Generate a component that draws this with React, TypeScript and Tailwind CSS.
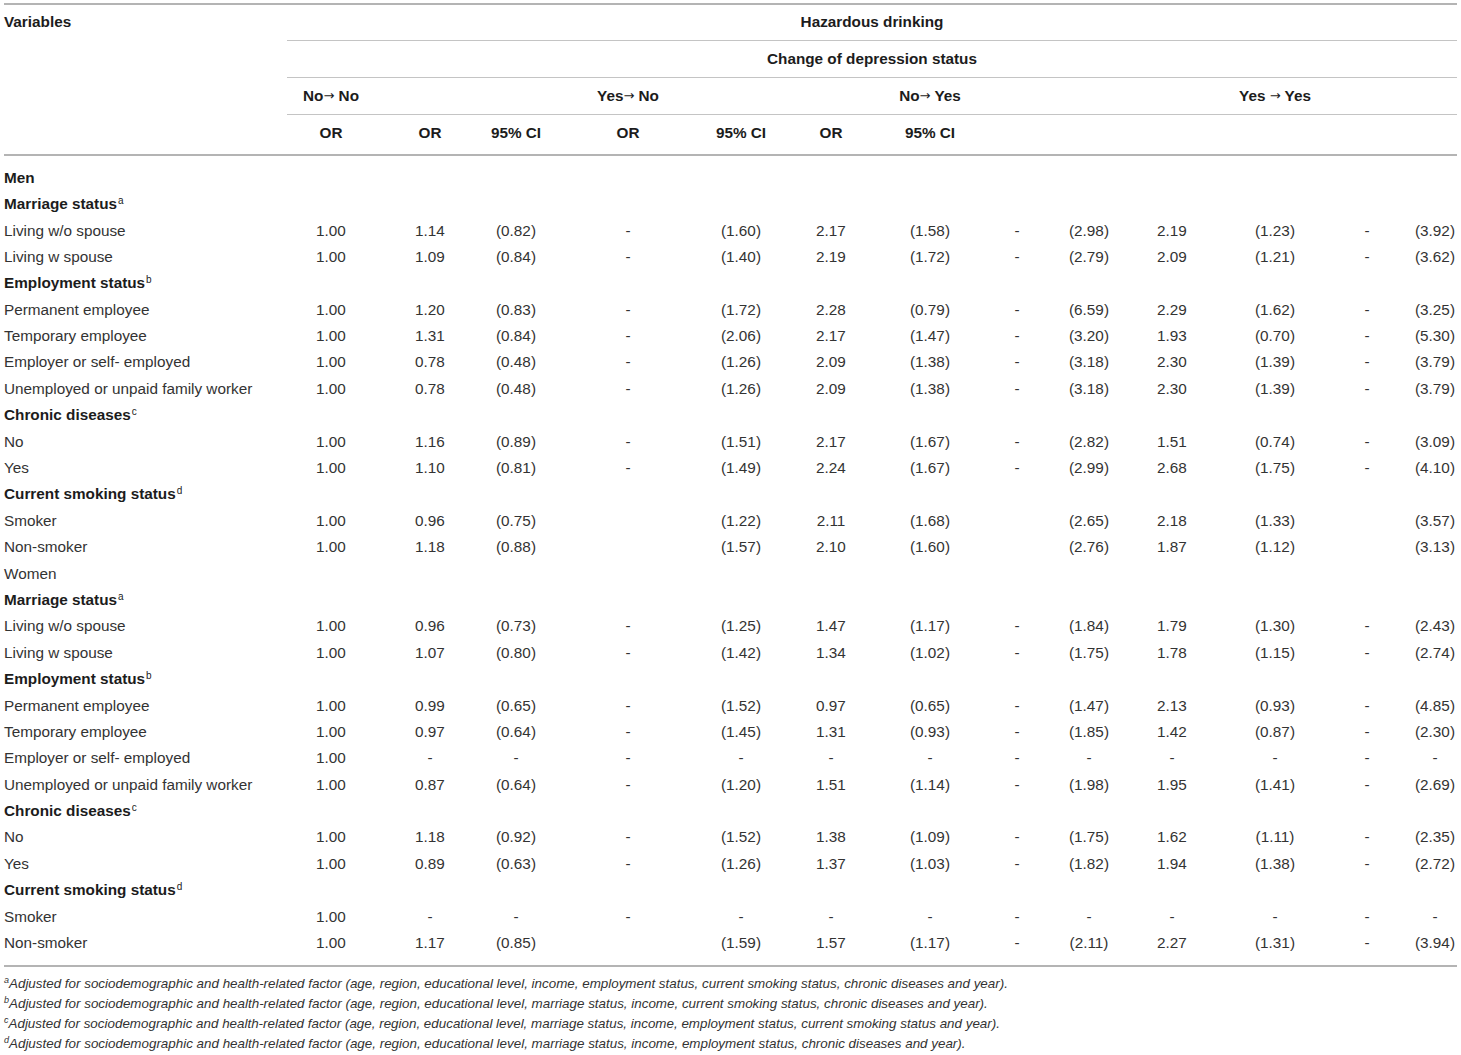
import React from 'react';

type Row = {
  label: string;
  sup?: string;
  kind?: 'group' | 'section' | 'plain';
  cells?: string[];
};

const COLS =
  'grid grid-cols-[283px_88px_110px_62px_162px_64px_116px_82px_92px_52px_114px_92px_92px_44px]';

const allDash = ['-', '-', '-', '-', '-', '-', '-', '-', '-', '-', '-', '-'];

const rows: Row[] = [
  { label: 'Men', kind: 'group' },
  { label: 'Marriage status', sup: 'a', kind: 'section' },
  { label: 'Living w/o spouse', cells: ['1.00', '1.14', '(0.82)', '-', '(1.60)', '2.17', '(1.58)', '-', '(2.98)', '2.19', '(1.23)', '-', '(3.92)'] },
  { label: 'Living w spouse', cells: ['1.00', '1.09', '(0.84)', '-', '(1.40)', '2.19', '(1.72)', '-', '(2.79)', '2.09', '(1.21)', '-', '(3.62)'] },
  { label: 'Employment status', sup: 'b', kind: 'section' },
  { label: 'Permanent employee', cells: ['1.00', '1.20', '(0.83)', '-', '(1.72)', '2.28', '(0.79)', '-', '(6.59)', '2.29', '(1.62)', '-', '(3.25)'] },
  { label: 'Temporary employee', cells: ['1.00', '1.31', '(0.84)', '-', '(2.06)', '2.17', '(1.47)', '-', '(3.20)', '1.93', '(0.70)', '-', '(5.30)'] },
  { label: 'Employer or self- employed', cells: ['1.00', '0.78', '(0.48)', '-', '(1.26)', '2.09', '(1.38)', '-', '(3.18)', '2.30', '(1.39)', '-', '(3.79)'] },
  { label: 'Unemployed or unpaid family worker', cells: ['1.00', '0.78', '(0.48)', '-', '(1.26)', '2.09', '(1.38)', '-', '(3.18)', '2.30', '(1.39)', '-', '(3.79)'] },
  { label: 'Chronic diseases', sup: 'c', kind: 'section' },
  { label: 'No', cells: ['1.00', '1.16', '(0.89)', '-', '(1.51)', '2.17', '(1.67)', '-', '(2.82)', '1.51', '(0.74)', '-', '(3.09)'] },
  { label: 'Yes', cells: ['1.00', '1.10', '(0.81)', '-', '(1.49)', '2.24', '(1.67)', '-', '(2.99)', '2.68', '(1.75)', '-', '(4.10)'] },
  { label: 'Current smoking status', sup: 'd', kind: 'section' },
  { label: 'Smoker', cells: ['1.00', '0.96', '(0.75)', '', '(1.22)', '2.11', '(1.68)', '', '(2.65)', '2.18', '(1.33)', '', '(3.57)'] },
  { label: 'Non-smoker', cells: ['1.00', '1.18', '(0.88)', '', '(1.57)', '2.10', '(1.60)', '', '(2.76)', '1.87', '(1.12)', '', '(3.13)'] },
  { label: 'Women', kind: 'plain' },
  { label: 'Marriage status', sup: 'a', kind: 'section' },
  { label: 'Living w/o spouse', cells: ['1.00', '0.96', '(0.73)', '-', '(1.25)', '1.47', '(1.17)', '-', '(1.84)', '1.79', '(1.30)', '-', '(2.43)'] },
  { label: 'Living w spouse', cells: ['1.00', '1.07', '(0.80)', '-', '(1.42)', '1.34', '(1.02)', '-', '(1.75)', '1.78', '(1.15)', '-', '(2.74)'] },
  { label: 'Employment status', sup: 'b', kind: 'section' },
  { label: 'Permanent employee', cells: ['1.00', '0.99', '(0.65)', '-', '(1.52)', '0.97', '(0.65)', '-', '(1.47)', '2.13', '(0.93)', '-', '(4.85)'] },
  { label: 'Temporary employee', cells: ['1.00', '0.97', '(0.64)', '-', '(1.45)', '1.31', '(0.93)', '-', '(1.85)', '1.42', '(0.87)', '-', '(2.30)'] },
  { label: 'Employer or self- employed', cells: ['1.00', ...allDash] },
  { label: 'Unemployed or unpaid family worker', cells: ['1.00', '0.87', '(0.64)', '-', '(1.20)', '1.51', '(1.14)', '-', '(1.98)', '1.95', '(1.41)', '-', '(2.69)'] },
  { label: 'Chronic diseases', sup: 'c', kind: 'section' },
  { label: 'No', cells: ['1.00', '1.18', '(0.92)', '-', '(1.52)', '1.38', '(1.09)', '-', '(1.75)', '1.62', '(1.11)', '-', '(2.35)'] },
  { label: 'Yes', cells: ['1.00', '0.89', '(0.63)', '-', '(1.26)', '1.37', '(1.03)', '-', '(1.82)', '1.94', '(1.38)', '-', '(2.72)'] },
  { label: 'Current smoking status', sup: 'd', kind: 'section' },
  { label: 'Smoker', cells: ['1.00', ...allDash] },
  { label: 'Non-smoker', cells: ['1.00', '1.17', '(0.85)', '', '(1.59)', '1.57', '(1.17)', '-', '(2.11)', '2.27', '(1.31)', '-', '(3.94)'] },
];

const footnotes = [
  { mark: 'a', text: 'Adjusted for sociodemographic and health-related factor (age, region, educational level, income, employment status, current smoking status, chronic diseases and year).' },
  { mark: 'b', text: 'Adjusted for sociodemographic and health-related factor (age, region, educational level, marriage status, income, current smoking status, chronic diseases and year).' },
  { mark: 'c', text: 'Adjusted for sociodemographic and health-related factor (age, region, educational level, marriage status, income, employment status, current smoking status and year).' },
  { mark: 'd', text: 'Adjusted for sociodemographic and health-related factor (age, region, educational level, marriage status, income, employment status, chronic diseases and year).' },
];

const subHeads = ['OR', 'OR', '95% CI', 'OR', '95% CI', 'OR', '95% CI', '', '', '', '', '', ''];

// [before arrow, space before arrow, after]
const groupHeads: ([string, boolean, string] | null)[] = [
  ['No', false, 'No'],
  null,
  null,
  ['Yes', false, 'No'],
  null,
  null,
  ['No', false, 'Yes'],
  null,
  null,
  null,
  ['Yes', true, 'Yes'],
  null,
  null,
];

function Arrow() {
  return (
    <span className="relative top-[-1px] inline-block font-['DejaVu_Sans',sans-serif] text-[13px] font-normal">
      {'\u2192'}
    </span>
  );
}

export default function App() {
  return (
    <div className="min-h-screen bg-white pl-[4px] pt-[3px] font-['Liberation_Sans',Arial,sans-serif] text-[15.3px] text-[#333]">
      <div className="w-[1453px] border-t-2 border-[#b4b4b4]">
        {/* header */}
        <div className={`${COLS} grid-rows-[36px_37px_37px_39px] border-b-2 border-[#b4b4b4] font-bold text-[#1c1c1c]`}>
          <div className="row-span-4 flex h-[35px] items-center">Variables</div>
          <div className="col-span-13 flex items-center justify-center border-b border-[#c4c4c4]">
            Hazardous drinking
          </div>
          <div className="col-span-13 flex items-center justify-center border-b border-[#c4c4c4]">
            Change of depression status
          </div>
          {groupHeads.map((h, i) => (
            <div key={`g${i}`} className="flex items-center justify-center border-b border-[#c4c4c4] whitespace-nowrap">
              {h && (
                <span>
                  {h[0]}
                  {h[1] ? ' ' : ''}
                  <Arrow /> {h[2]}
                </span>
              )}
            </div>
          ))}
          {subHeads.map((h, i) => (
            <div key={`s${i}`} className="flex items-center justify-center pb-[2px] whitespace-nowrap">
              {h}
            </div>
          ))}
        </div>

        {/* body */}
        <div className="border-b-2 border-[#b4b4b4] pt-[9px] pb-[8px]">
          {rows.map((r, idx) => (
            <div key={idx} className={`${COLS} h-[26.4px] items-center`}>
              <div
                className={`whitespace-nowrap ${
                  r.kind === 'group' || r.kind === 'section' ? 'font-bold text-[#1c1c1c]' : ''
                }`}
              >
                {r.label}
                {r.sup && (
                  <sup className="ml-[1px] text-[10px] font-normal">{r.sup}</sup>
                )}
              </div>
              {(r.cells ?? []).map((c, i) => (
                <div key={i} className="text-center whitespace-nowrap">
                  {c}
                </div>
              ))}
            </div>
          ))}
        </div>

        {/* footnotes */}
        <div className="pt-[7px] text-[13.4px] italic leading-[20px] text-[#333]">
          {footnotes.map((f) => (
            <div key={f.mark} className="whitespace-nowrap">
              <sup className="text-[9px]">{f.mark}</sup>
              {f.text}
            </div>
          ))}
        </div>
      </div>
    </div>
  );
}
